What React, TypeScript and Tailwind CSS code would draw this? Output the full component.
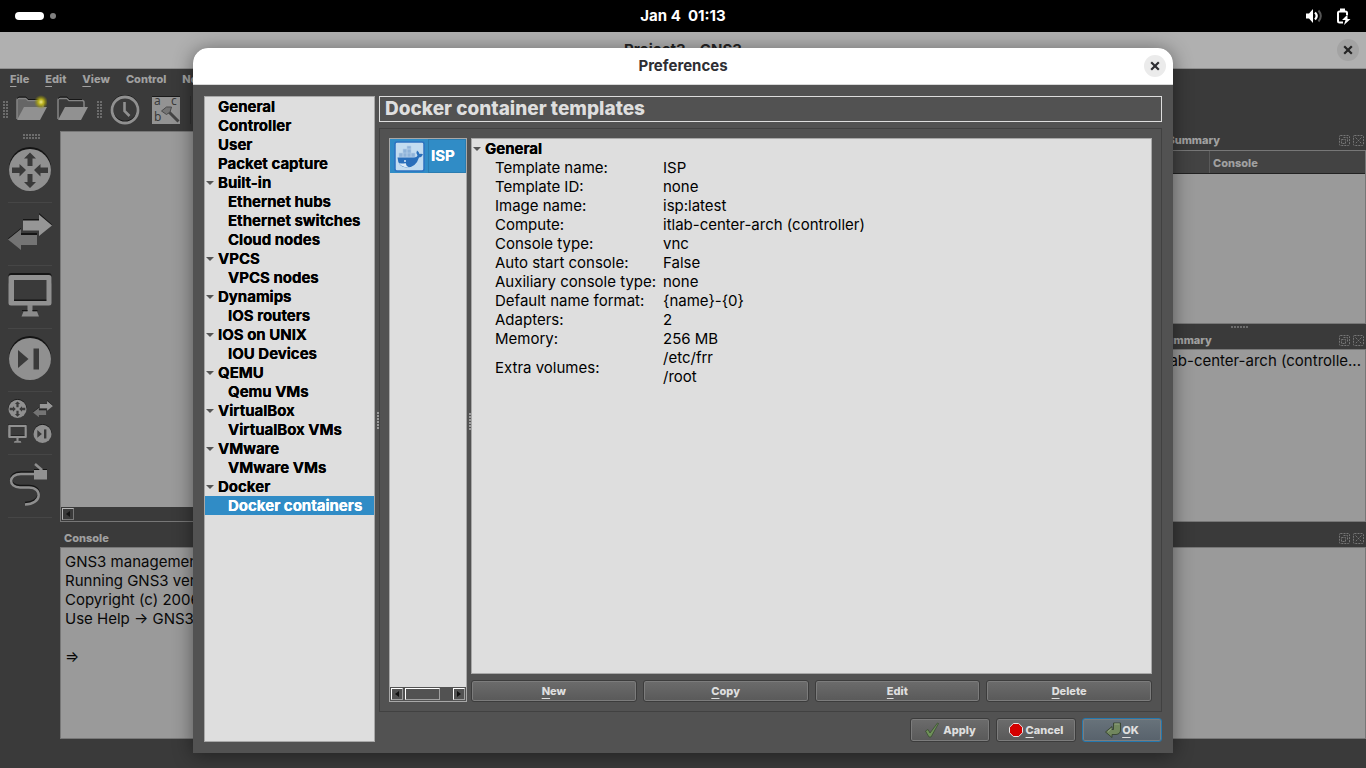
import type { ReactNode } from "react";

type TreeItem = { label: string; children?: string[] };

const pages: TreeItem[] = [
  { label: "General" },
  { label: "Controller" },
  { label: "User" },
  { label: "Packet capture" },
  { label: "Built-in", children: ["Ethernet hubs", "Ethernet switches", "Cloud nodes"] },
  { label: "VPCS", children: ["VPCS nodes"] },
  { label: "Dynamips", children: ["IOS routers"] },
  { label: "IOS on UNIX", children: ["IOU Devices"] },
  { label: "QEMU", children: ["Qemu VMs"] },
  { label: "VirtualBox", children: ["VirtualBox VMs"] },
  { label: "VMware", children: ["VMware VMs"] },
  { label: "Docker", children: ["Docker containers"] },
];

const details: [string, string[]][] = [
  ["Template name:", ["ISP"]],
  ["Template ID:", ["none"]],
  ["Image name:", ["isp:latest"]],
  ["Compute:", ["itlab-center-arch (controller)"]],
  ["Console type:", ["vnc"]],
  ["Auto start console:", ["False"]],
  ["Auxiliary console type:", ["none"]],
  ["Default name format:", ["{name}-{0}"]],
  ["Adapters:", ["2"]],
  ["Memory:", ["256 MB"]],
  ["Extra volumes:", ["/etc/frr", "/root"]],
];

const smallLabel = "text-[11px] font-extrabold";
// The shadow thickens the edges of the bold strokes
const itemLabel = "text-[15px] font-bold [text-shadow:0_0_0_currentColor]";

// First letter underlined, as a keyboard mnemonic
function Mnemonic({ text }: { text: string }) {
  return (
    <span>
      <span className="underline decoration-1 underline-offset-3 [text-decoration-skip-ink:none]">{text[0]}</span>
      {text.slice(1)}
    </span>
  );
}

function Grip({ cols, rows, className = "" }: { cols: number; rows: number; className?: string }) {
  const dots = [];
  for (let y = 0; y < rows; y++) {
    for (let x = 0; x < cols; x++) dots.push(<rect key={`${x}-${y}`} x={x * 3} y={y * 3} width="2" height="2" />);
  }
  return (
    <svg width={cols * 3} height={rows * 3} className={`shrink-0 fill-[#6c6c6c] ${className}`} aria-hidden="true">
      {dots}
    </svg>
  );
}

function CloseButton({ className }: { className: string }) {
  return (
    <button aria-label="Close" className={`flex size-[22px] items-center justify-center rounded-full ${className}`}>
      <svg width="10" height="10" viewBox="0 0 10 10" fill="none" stroke="currentColor" strokeWidth="2.2">
        <path d="M1.200 1.200l7.600 7.600M8.800 1.200l-7.600 7.600" />
      </svg>
    </button>
  );
}

/* ---------- desktop bar ---------- */

function TopBar() {
  return (
    <header className="grid h-8 shrink-0 grid-cols-3 items-center bg-black px-[15px] text-white">
      <div className="flex items-center gap-1.5">
        <span className="h-2 w-[29px] rounded-full bg-white" />
        <span className="size-1.5 rounded-full bg-[#808080]" />
      </div>
      <p className="whitespace-pre text-center text-[15px] font-bold">Jan 4  01:13</p>
      <div className="flex items-center justify-end gap-3">
        <svg width="18" height="16" viewBox="0 0 18 16" fill="none">
          <path d="M1 5.500h3L8 1v14L4 10.500H1z" fill="#fff" />
          <path d="M10 4.500q3.400 3.500 0 7" stroke="#fff" strokeWidth="2.200" />
          <path d="M13.500 2.500q4.600 5.500 0 11" stroke="#555" strokeWidth="2" />
        </svg>
        <svg width="16" height="17" viewBox="0 0 16 17" fill="none">
          <path d="M8 14.500H4.500Q3 14.500 3 13V5Q3 3.500 4.500 3.500H10.500Q12 3.500 12 5V7" stroke="#fff" strokeWidth="2" />
          <path d="M5 .5h5V3H5z" fill="#fff" />
          <path d="M12.500 6.500L7 12h3.500L9 17l6.500-6h-3z" fill="#fff" />
        </svg>
      </div>
    </header>
  );
}

/* ---------- toolbar drawings ---------- */

function RouterIcon({ className }: { className: string }) {
  return (
    <svg viewBox="0 0 44 44" className={className}>
      <circle cx="22" cy="21" r="21" fill="#141414" />
      <circle cx="22" cy="23" r="21" fill="#909090" />
      <g fill="#3a3a3a">
        <path d="M22 5.500L28 11.500H24.500V19H19.500V11.500H16z" />
        <path d="M22 41L28 35H24.500V27H19.500V35H16z" />
        <path d="M18 23L11.500 17V20.500H4V26H11.500V29.500z" />
        <path d="M26 23L32.500 17V20.500H40V26H32.500V29.500z" />
      </g>
    </svg>
  );
}

function SwitchIcon({ className }: { className: string }) {
  return (
    <svg viewBox="0 0 44 44" className={className}>
      <path d="M15 9H31V3L44 14.500 31 25V19H15zM13 18V23H29V34H13V38L0 28.500z" fill="#151515" />
      <path d="M15 10.500H31V4.500L44 15.500 31 26V20.500H15z" fill="#969696" />
      <path d="M29 25H13V19L0 29.500 13 40V35H29z" fill="#747474" />
    </svg>
  );
}

function MonitorIcon({ className }: { className: string }) {
  return (
    <svg viewBox="0 0 44 44" className={className}>
      <rect x=".5" width="43" height="12" rx="3" fill="#151515" />
      <path d="M5 6h35v23H5z" fill="#3a3a3a" />
      <path d="M5 26.500h35V29H5z" fill="#151515" />
      <path d="M3 2H41Q43.500 2 43.500 4.500V30Q43.500 32.500 41 32.500H3Q.5 32.500.5 30V4.500Q.5 2 3 2zM6 7V28H38.500V7z" fill="#919191" fillRule="evenodd" />
      <path d="M19.500 32H24.500V38.500H29L31 43.500H13.500L15.500 38.500H19.500z" fill="#8b8b8b" />
      <path d="M14 37.500h5.500M24.500 37.500h5" stroke="#151515" />
    </svg>
  );
}

function SecurityIcon({ className }: { className: string }) {
  return (
    <svg viewBox="0 0 44 44" className={className}>
      <circle cx="22" cy="21" r="21" fill="#141414" />
      <circle cx="22" cy="23" r="21" fill="#909090" />
      <path d="M10 14L20.500 23 10 32z" fill="#3a3a3a" />
      <path d="M25.500 12.500h5.500v21h-5.500z" fill="#3a3a3a" />
    </svg>
  );
}

function CableIcon() {
  return (
    <svg viewBox="0 0 44 44" className="size-11">
      <path d="M26 12H13C0 12 0 25.500 12 25.500H21C35 25.500 34 42.500 17 42.500" fill="none" stroke="#151515" strokeWidth="2.500" transform="translate(0 -1.500)" />
      <path d="M26 12H13C0 12 0 25.500 12 25.500H21C35 25.500 34 42.500 17 42.500" fill="none" stroke="#8e8e8e" strokeWidth="2.500" />
      <path d="M27 2L34 8" stroke="#8e8e8e" strokeWidth="2.500" />
      <path d="M26 8h13v9.500H26z" fill="#929292" />
      <path d="M26 7.500h5M35 7.500h4" stroke="#151515" />
    </svg>
  );
}

function FolderIcon({ glow }: { glow?: boolean }) {
  return (
    <svg width="31" height="30" viewBox="0 0 31 30">
      <defs>
        <radialGradient id="glow">
          <stop offset="0" stopColor="#ece88a" />
          <stop offset=".4" stopColor="#b5ad1d" />
          <stop offset="1" stopColor="#8d8800" stopOpacity="0" />
        </radialGradient>
      </defs>
      <path d="M1 24V5Q1 3.500 2.500 3.500H10L12 5.500H25Q27 5.500 27 7.500V13" fill={glow ? "#666" : "#3a3a3a"} stroke="#858585" strokeWidth="1.500" />
      <path d="M1 3.500l2-1.500h7l2 2.500h13" fill="none" stroke="#161616" />
      <path d="M8 12H31L24 25H1z" fill="#919191" />
      {glow && <circle cx="25" cy="7" r="7" fill="url(#glow)" />}
    </svg>
  );
}

function ClockIcon() {
  return (
    <svg width="30" height="30" viewBox="0 0 30 30" fill="none">
      <circle cx="15" cy="14" r="13" stroke="#161616" strokeWidth="2.500" />
      <circle cx="15" cy="15" r="13" stroke="#909090" strokeWidth="2.800" />
      <path d="M14.500 7v9l5 5" stroke="#909090" strokeWidth="2.600" />
    </svg>
  );
}

function AnnotateIcon() {
  return (
    <svg width="28" height="28" viewBox="0 0 28 28" overflow="visible">
      <path d="M0 0h28v28H0z" fill="#939393" />
      <path d="M0 .5h28" stroke="#1a1a1a" />
      <g fill="#3a3a3a" fontFamily="Noto Sans" fontSize="12">
        <text x="2" y="9">a</text>
        <text x="19" y="9">c</text>
        <text x="2" y="25">b</text>
      </g>
      <path d="M17 16l9.500 9.500" stroke="#444" strokeWidth="3" />
      <path d="M9.500 15l5-4h5l-1.500 5-3.500 2.500z" fill="#747474" stroke="#4a4a4a" />
    </svg>
  );
}

/* ---------- main window ---------- */

function DockHeader({ title, className = "" }: { title: string; className?: string }) {
  return (
    <div className={`flex shrink-0 items-center justify-between pl-1 text-[#a0a0a0] ${smallLabel} ${className}`}>
      <h2>{title}</h2>
      <div className="flex gap-[3px] pr-0.5 text-[#767676]">
        <button aria-label={`Float ${title}`}>
          <svg width="11" height="11" viewBox="0 0 11 11" fill="none" stroke="currentColor" strokeDasharray="2 1">
            <rect x=".5" y=".5" width="10" height="10" rx="1" />
            <path d="M2.500 4.500h4v4h-4zM4.500 2.500h4v4" />
          </svg>
        </button>
        <button aria-label={`Close ${title}`}>
          <svg width="11" height="11" viewBox="0 0 11 11" fill="none" stroke="currentColor">
            <rect x=".5" y=".5" width="10" height="10" rx="1" strokeDasharray="2 1" />
            <path d="M2.500 2.500l6 6M8.500 2.500l-6 6" strokeDasharray="2 1" />
          </svg>
        </button>
      </div>
    </div>
  );
}

function DeviceBar() {
  const cell = "flex h-[63px] w-11 items-center justify-center border-b border-[#464646] pb-1";
  return (
    <nav aria-label="Devices" className="flex w-[60px] shrink-0 flex-col items-center pt-[3px]">
      <Grip cols={6} rows={2} className="ml-1" />
      <button aria-label="Routers" className={cell}><RouterIcon className="size-11" /></button>
      <button aria-label="Switches" className={cell}><SwitchIcon className="size-11" /></button>
      <button aria-label="End devices" className={cell}><MonitorIcon className="size-11" /></button>
      <button aria-label="Security devices" className={cell}><SecurityIcon className="size-11" /></button>
      <button aria-label="All devices" className={cell}>
        <span className="grid grid-cols-2 gap-x-[5px] gap-y-[5px]">
          <RouterIcon className="size-[19px]" />
          <SwitchIcon className="size-5" />
          <MonitorIcon className="size-[19px]" />
          <SecurityIcon className="size-[19px]" />
        </span>
      </button>
      <button aria-label="Add a link" className={cell}><CableIcon /></button>
    </nav>
  );
}

function MainWindow() {
  return (
    <div className="flex min-h-0 flex-1 flex-col bg-[#3a3a3a]">
      <div className="grid h-[37px] shrink-0 grid-cols-[1fr_auto_1fr] items-center border-b border-[#8e8e8e] bg-[#b0b0b0] px-[7px] text-[#242424]">
        <h1 className="col-start-2 text-[15px] font-bold">Project3 - GNS3</h1>
        <CloseButton className="justify-self-end bg-[#a3a3a3]" />
      </div>

      <nav aria-label="Menu" className={`flex h-5 shrink-0 items-center gap-4 px-2.5 text-[#a0a0a0] ${smallLabel}`}>
        <button><Mnemonic text="File" /></button>
        <button><Mnemonic text="Edit" /></button>
        <button><Mnemonic text="View" /></button>
        <button>Control</button>
        <button>Node</button>
      </nav>

      <div className="flex h-[42px] shrink-0 items-center px-[3px]">
        <Grip cols={2} rows={6} className="mr-[7px]" />
        <button aria-label="New project" className="mr-2.5"><FolderIcon glow /></button>
        <button aria-label="Open project" className="mr-[9px]"><FolderIcon /></button>
        <Grip cols={2} rows={6} className="mr-[7px]" />
        <button aria-label="Snapshot" className="mr-3"><ClockIcon /></button>
        <button aria-label="Show interface labels" className="mr-2.5"><AnnotateIcon /></button>
        <span className="h-7 w-px bg-[#2f2f2f]" />
      </div>

      <div className="flex min-h-0 flex-1">
        <DeviceBar />
        <div className="flex min-w-0 flex-1 flex-col">
          <div className="flex min-h-0 flex-1">
            <div className="flex flex-1 flex-col border border-[#777]">
              <div className="flex-1 bg-[#9a9a9a]" />
              <div className="flex h-[14px] items-center pl-px">
                <button aria-label="Scroll left" className="flex size-3 items-center justify-center border border-[#777] border-t-[#b5b5b5] border-l-[#b5b5b5]">
                  <svg width="4" height="6"><path d="M4 0v6L0 3z" fill="#151515" /></svg>
                </button>
              </div>
            </div>
            <aside className="ml-1 flex w-64 flex-col">
              <DockHeader title="Topology Summary" className="h-[19px]" />
              <div className="flex h-[174px] flex-col border border-[#777] bg-[#9a9a9a]">
                <div className={`grid h-[23px] grid-cols-[98px_1fr] items-center border-b border-[#222] bg-[#434343] text-[#a0a0a0] ${smallLabel}`}>
                  <span className="pl-1">Node</span>
                  <span className="flex h-full items-center border-l border-[#5a5a5a] pt-0.5 pl-[3px]">Console</span>
                </div>
              </div>
              <div className="flex h-[7px] items-center justify-center pl-1">
                <Grip cols={6} rows={1} />
              </div>
              <DockHeader title="Servers Summary" className="h-[18px]" />
              <div className="flex-1 border border-[#777] bg-[#9a9a9a] pt-px pr-1 text-right text-[15px] leading-[19px] text-[#080808]">
                itlab-center-arch (controlle...
              </div>
            </aside>
          </div>

          <section className="flex flex-col pb-[29px]">
            <DockHeader title="Console" className="h-[25px] pt-[7px]" />
            <pre className="h-[192px] border border-[#777] bg-[#9a9a9a] px-1 pt-1 font-[Inter,sans-serif] text-[15px] leading-[19px] text-[#080808]">
              {"GNS3 management console.\nRunning GNS3 version 2.2\nCopyright (c) 2006\nUse Help → GNS3 Doctor\n\n⇒"}
            </pre>
          </section>
        </div>
      </div>
    </div>
  );
}

/* ---------- preferences dialog ---------- */

function Arrow() {
  return (
    <svg width="8" height="4" viewBox="0 0 8 4" className="shrink-0" aria-hidden="true">
      <path d="M0 0h8L4 4z" fill="#555" />
    </svg>
  );
}

function PageTree() {
  return (
    <ul className={`w-[171px] shrink-0 border border-[#a8a8a8] bg-[#dedede] leading-[19px] text-black ${itemLabel}`}>
      {pages.map((page) => (
        <li key={page.label}>
          <div className="flex items-center pl-px">
            <span className="mr-1 w-2">{page.children && <Arrow />}</span>
            {page.label}
          </div>
          {page.children && (
            <ul>
              {page.children.map((child) => (
                <li
                  key={child}
                  className={
                    child === "Docker containers"
                      ? "bg-[#308cc6] pl-[23px] text-white [text-shadow:0_0_0_currentColor]"
                      : "pl-[23px]"
                  }
                >
                  {child}
                </li>
              ))}
            </ul>
          )}
        </li>
      ))}
    </ul>
  );
}

function DockerIcon() {
  return (
    <svg width="31" height="31" viewBox="0 0 31 31">
      <rect x="1" y="1" width="29" height="29" rx="2" fill="#c3dcf0" stroke="#2c72c0" strokeWidth="1.500" />
      <g fill="#8fb3d9" stroke="#b4cfe8" strokeWidth=".6">
        <path d="M5 12h4v4H5zM9 8h4v8H9zM13 8h4v8h-4zM13 5h4v3h-4zM17 12h4v4h-4z" />
        <path d="M9 12h8" />
      </g>
      <path d="M3.500 16.500H20Q23 16.500 23.500 14.500 21.500 12 23 9.500 25 10.500 25.500 13 28 12.500 29 13.500 28 16 25 16.500 22 26.500 12.500 26.500 4 26 3.500 16.500z" fill="#2a6fbb" />
      <path d="M5 22Q9 23 11.500 22 12 25 15 26.300 8 27 5 22z" fill="#dcebf7" />
      <circle cx="11" cy="20" r="1" fill="#dcebf7" />
    </svg>
  );
}

function ScrollEnd({ label, points }: { label: string; points: string }) {
  return (
    <button aria-label={label} className="flex size-3 items-center justify-center border border-[#a0a0a0] border-t-white border-l-white">
      <svg width="4" height="6"><path d={points} fill="#111" /></svg>
    </button>
  );
}

function PushButton({ children, className }: { children: ReactNode; className: string }) {
  return (
    <button
      className={`flex items-center justify-center rounded-[3px] border text-[#dedede] inset-ring inset-ring-[#7c7c7c] ${smallLabel} ${className}`}
    >
      {children}
    </button>
  );
}

function ApplyIcon() {
  return (
    <svg width="16" height="16" viewBox="0 0 16 16">
      <path d="M1.500 9l2.500-1.500 2 3.500L13.500 1l1 .5L7 15H5z" fill="#6f9159" stroke="#34472b" strokeWidth=".7" />
    </svg>
  );
}

function CancelIcon() {
  return (
    <svg width="14" height="14" viewBox="0 0 14 14">
      <path d="M4.300.5h5.400l3.800 3.800v5.400l-3.800 3.800H4.300L.5 9.700V4.300z" fill="#d40000" stroke="#e6e6e6" />
    </svg>
  );
}

function OkIcon() {
  return (
    <svg width="16" height="16" viewBox="0 0 16 16">
      <path d="M8.500 1h7v7q0 4-4.500 4.500H7V15.500L.5 10 7 4.500v3h1.500z" fill="#71875e" stroke="#303c29" strokeWidth=".8" />
      <path d="M9.500 2h5M3 9.500L6.500 6.500" fill="none" stroke="#94a584" />
    </svg>
  );
}

function TemplateDetails() {
  return (
    <div className="min-h-0 flex-1 border border-[#a8a8a8] bg-[#dedede] text-[15px] leading-[19px] text-black">
      <h3 className={`flex items-center gap-1 pl-px leading-[19px] ${itemLabel}`}>
        <Arrow />
        General
      </h3>
      <table className="ml-[23px] border-collapse">
        <tbody>
          {details.map(([name, values]) => (
            <tr key={name}>
              <th scope="row" className="w-[168px] p-0 text-left align-middle font-normal whitespace-nowrap">
                {name}
              </th>
              <td className="p-0">
                {values.map((value) => (
                  <div key={value}>{value}</div>
                ))}
              </td>
            </tr>
          ))}
        </tbody>
      </table>
    </div>
  );
}

function PreferencesDialog() {
  const plain = "border-[#3c3c3c] bg-linear-to-b from-[#6c6c6c] to-[#595959]";
  return (
    <div
      role="dialog"
      aria-labelledby="preferences-title"
      className="absolute inset-x-0 top-12 bottom-[15px] mx-auto flex w-[980px] max-w-full flex-col overflow-hidden rounded-t-[15px] bg-[#525252] shadow-[0_2px_20px_rgba(0,0,0,0.45)]"
    >
      <div className="grid h-[37px] shrink-0 grid-cols-[1fr_auto_1fr] items-center border-b border-[#d8d8d8] bg-white px-[7px] text-[#2e2e33]">
        <h2 id="preferences-title" className="col-start-2 text-[15px] font-bold">Preferences</h2>
        <CloseButton className="justify-self-end bg-[#ebebeb]" />
      </div>

      <div className="flex min-h-0 flex-1 p-[11px]">
        <PageTree />
        <div className="flex w-1 shrink-0 items-center overflow-hidden pt-1 pl-0.5">
          <Grip cols={1} rows={6} className="fill-[#9a9a9a]" />
        </div>

        <div className="flex min-w-0 flex-1 flex-col">
          <h2 className="h-[26px] border border-[#dedede] px-[5px] text-[19px] leading-6 font-extrabold text-[#dedede]">
            Docker container templates
          </h2>

          <div className="mt-[6px] flex min-h-0 flex-1 border border-[#414141] p-[9px]">
            <div className="flex w-[78px] shrink-0 flex-col border border-[#a8a8a8] bg-[#dedede]">
              <div className={`flex h-[34px] items-center bg-[#308cc6] pl-1 text-white ${itemLabel}`}>
                <DockerIcon />
                <span className="ml-[3px] flex h-full flex-1 items-center border border-[#2a7cb0] pl-0.5">ISP</span>
              </div>
              <div className="mt-auto flex h-[14px] items-center bg-[#525252] px-px">
                <ScrollEnd label="Scroll left" points="M4 0v6L0 3z" />
                <span className="ml-0.5 h-3 w-[35px] border border-[#a0a0a0] border-t-white border-l-white" />
                <span className="flex-1" />
                <ScrollEnd label="Scroll right" points="M0 0v6l4-3z" />
              </div>
            </div>
            <div className="flex w-1 shrink-0 items-center overflow-hidden pt-1 pl-0.5">
              <Grip cols={1} rows={6} className="fill-[#9a9a9a]" />
            </div>
            <div className="flex min-w-0 flex-1 flex-col gap-[6px]">
              <TemplateDetails />
              <div className="grid h-[22px] shrink-0 grid-cols-4 gap-[6px]">
                <PushButton className={plain}><Mnemonic text="New" /></PushButton>
                <PushButton className={plain}><Mnemonic text="Copy" /></PushButton>
                <PushButton className={plain}><Mnemonic text="Edit" /></PushButton>
                <PushButton className={plain}><Mnemonic text="Delete" /></PushButton>
              </div>
            </div>
          </div>

          <div className="mt-[6px] flex h-6 shrink-0 justify-end gap-[6px]">
            <PushButton className={`w-20 gap-[3px] ${plain}`}><ApplyIcon />Apply</PushButton>
            <PushButton className={`w-20 gap-[3px] ${plain}`}><CancelIcon /><Mnemonic text="Cancel" /></PushButton>
            <PushButton className="w-20 gap-px border-[#2478ae] bg-linear-to-b from-[#68737b] to-[#58626c]"><OkIcon /><Mnemonic text="OK" /></PushButton>
          </div>
        </div>
      </div>
    </div>
  );
}

export default function App() {
  return (
    <div className="relative flex h-screen min-h-[640px] flex-col overflow-hidden bg-[#3a3a3a] font-[Inter,sans-serif]">
      <TopBar />
      <MainWindow />
      <PreferencesDialog />
    </div>
  );
}
